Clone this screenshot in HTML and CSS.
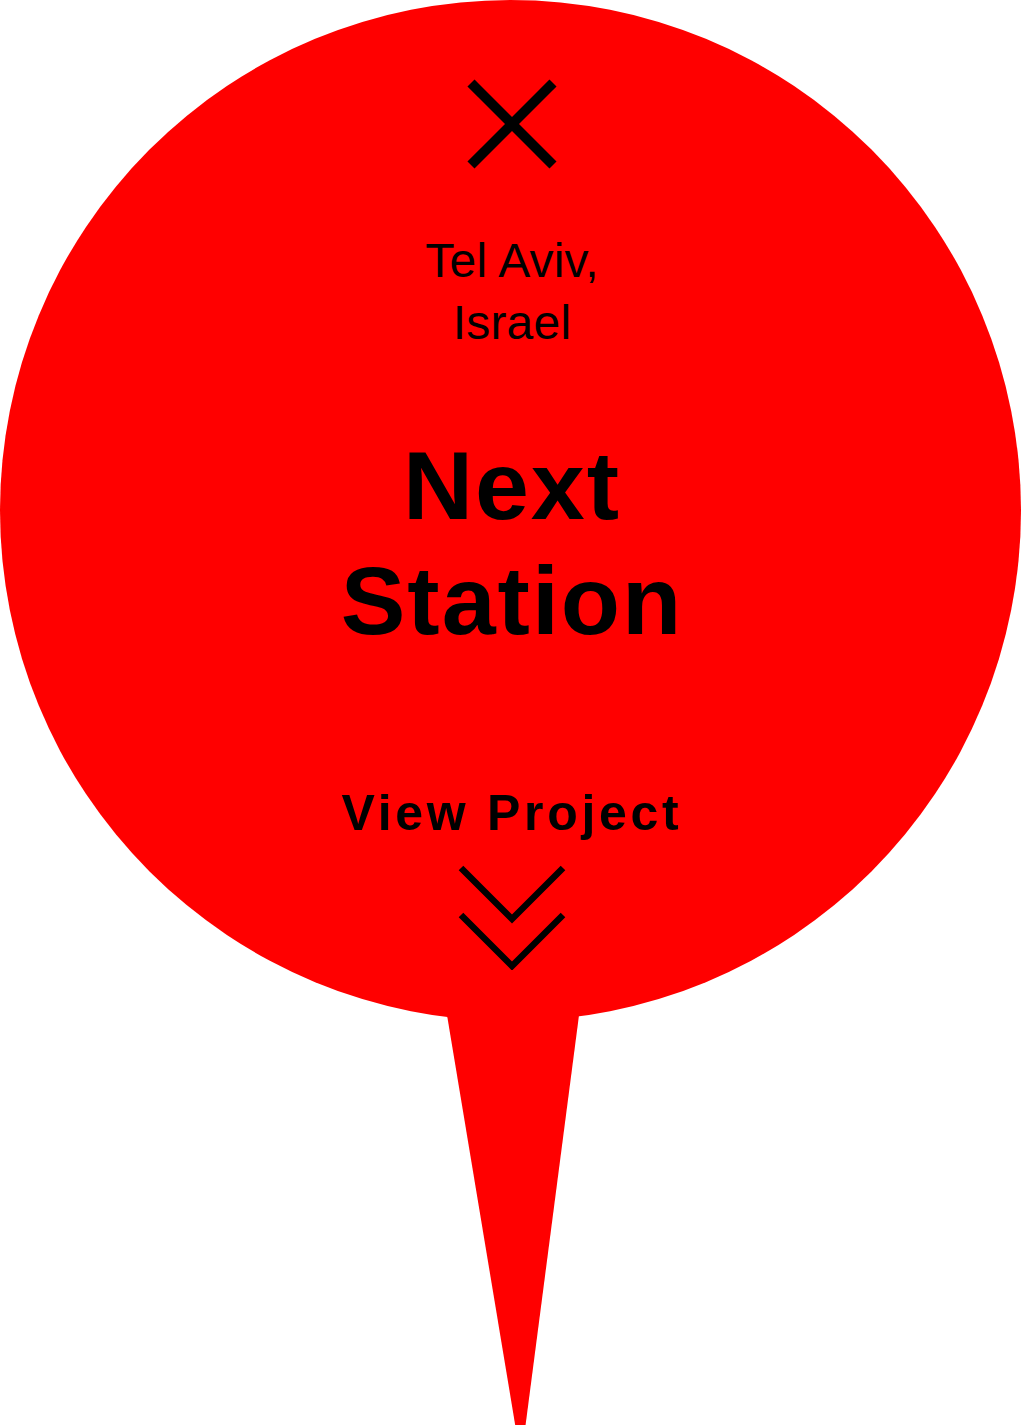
FILE: index.html
```html
<!DOCTYPE html>
<html lang="en">
<head>
<meta charset="utf-8">
<title>Next Station</title>
<link rel="stylesheet" href="styles.css">
</head>
<body>
<div class="pin">
  <svg class="pin-shape" width="1021" height="1425" viewBox="0 0 1021 1425" aria-hidden="true">
    <circle cx="510.5" cy="510.5" r="510.5" fill="#ff0000"/>
    <polygon points="444.5,1000 581,1000 521,1460" fill="#ff0000"/>
  </svg>
  <div class="content">
    <button class="close" aria-label="Close">
      <svg width="96" height="96" viewBox="0 0 96 96">
        <line x1="7" y1="7" x2="89" y2="89" stroke="#000" stroke-width="10"/>
        <line x1="89" y1="7" x2="7" y2="89" stroke="#000" stroke-width="10"/>
      </svg>
    </button>
    <p class="location">Tel Aviv, Israel</p>
    <h1 class="title">Next Station</h1>
    <a class="view" href="#">View Project</a>
    <svg class="chevrons" width="110" height="110" viewBox="0 0 110 110" aria-hidden="true">
      <polyline points="4,8 55,59 106,8" fill="none" stroke="#000" stroke-width="6.5"/>
      <polyline points="4,55 55,106 106,55" fill="none" stroke="#000" stroke-width="6.5"/>
    </svg>
  </div>
</div>
</body>
</html>
```
FILE: styles.css
```css
html, body {
  margin: 0;
  padding: 0;
  background: #ffffff;
}

body {
  font-family: "Liberation Sans", Arial, Helvetica, sans-serif;
  color: #000;
}

.pin {
  position: relative;
  width: 1021px;
  height: 1425px;
  overflow: hidden;
}

.pin-shape {
  position: absolute;
  top: 0;
  left: 0;
  display: block;
}

.content {
  position: relative;
  display: flex;
  flex-direction: column;
  align-items: center;
  padding-top: 76px;
  padding-left: 3px;
}

.close {
  display: block;
  width: 96px;
  height: 96px;
  padding: 0;
  border: 0;
  background: none;
  cursor: pointer;
}

.close svg {
  display: block;
}

.location {
  margin: 58px 0 0;
  max-width: 230px;
  font-size: 48px;
  line-height: 62px;
  letter-spacing: 0.2px;
  text-align: center;
  font-weight: normal;
}

.title {
  margin: 74px 0 0;
  max-width: 420px;
  font-size: 97px;
  line-height: 115px;
  font-weight: bold;
  letter-spacing: 2px;
  text-align: center;
}

.view {
  display: block;
  margin-top: 125px;
  font-size: 50px;
  line-height: 60px;
  font-weight: bold;
  letter-spacing: 3.7px;
  color: #000;
  text-decoration: none;
}

.chevrons {
  display: block;
  margin-top: 17px;
}
```
